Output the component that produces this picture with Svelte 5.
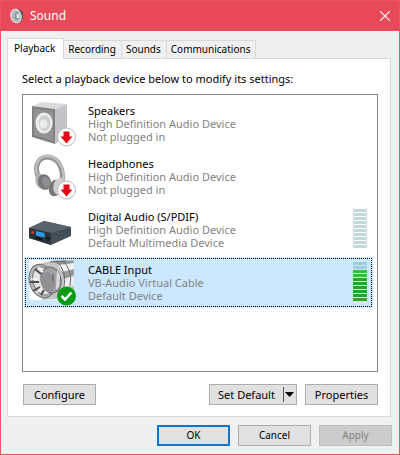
<script>
  const tabs = ['Playback', 'Recording', 'Sounds', 'Communications'];
  const devices = [
    { name: 'Speakers', driver: 'High Definition Audio Device', status: 'Not plugged in', icon: 'speaker', badge: 'down' },
    { name: 'Headphones', driver: 'High Definition Audio Device', status: 'Not plugged in', icon: 'headphones', badge: 'down' },
    { name: 'Digital Audio (S/PDIF)', driver: 'High Definition Audio Device', status: 'Default Multimedia Device', icon: 'digital', level: 0 },
    { name: 'CABLE Input', driver: 'VB-Audio Virtual Cable', status: 'Default Device', icon: 'cable', badge: 'ok', level: 8 },
  ];
  let activeTab = $state('Playback');
  let selected = $state(3);
</script>

<div class="window">
  <header>
    <svg class="app" width="16" height="16" viewBox="0 0 16 16" aria-hidden="true">
      <path d="M6 1 L11 2 L13 5 L13 10 L10 14 L6 15Z" fill="#4b4b4b" />
      <ellipse cx="6" cy="8" rx="5.2" ry="6.8" transform="rotate(-12 6 8)" fill="#b4bcc0" stroke="#e6eaec" />
      <ellipse cx="7" cy="8" rx="2.5" ry="4" fill="#8c979d" />
      <ellipse cx="8" cy="8" rx="1.5" ry="2.4" fill="#e2e7e9" />
    </svg>
    <h1>Sound</h1>
    <button class="close" aria-label="Close">
      <svg width="10" height="10" viewBox="0 0 10 10"><path d="M0 0 L10 10 M10 0 L0 10" stroke="#fff" stroke-width="1.1" /></svg>
    </button>
  </header>

  <main>
    <div class="tabs" role="tablist">
      {#each tabs as tab}
        <button role="tab" class:active={activeTab === tab} aria-selected={activeTab === tab} onclick={() => (activeTab = tab)}>{tab}</button>
      {/each}
    </div>

    <section class="panel" role="tabpanel">
      <p id="hint">Select a playback device below to modify its settings:</p>
      <ul role="listbox" aria-labelledby="hint">
        {#each devices as device, i}
          <li>
            <button class="device" role="option" class:selected={selected === i} aria-selected={selected === i} onclick={() => (selected = i)}>
              <svg class="icon" width="56" height="51" viewBox="0 0 56 51" aria-hidden="true">
                {#if device.icon === 'speaker'}
                  <path d="M8 8 L18 4 L43 6 L31 11Z" fill="#dcdcde" />
                  <path d="M31 11 L43 6 L43 37 L31 46Z" fill="#c3c4c8" />
                  <path d="M8 8 L31 11 L31 46 L8 39Z" fill="#808183" />
                  <path d="M10 11 L29 13 L29 43 L10 37Z" fill="#929395" />
                  <ellipse cx="20" cy="25" rx="8.6" ry="10.6" fill="#ececed" />
                  <ellipse cx="20.5" cy="25" rx="6.6" ry="8.6" fill="#cdd0d1" stroke="#f5f5f5" />
                  <ellipse cx="19.5" cy="26" rx="4" ry="4.5" fill="#e9eaea" />
                {:else if device.icon === 'headphones'}
                  <path d="M14 25 C10 14 15 6 24 6 C34 7 40 17 38 31" fill="none" stroke="#939496" stroke-width="5" />
                  <path d="M13 23 C10 12 16 5 24 5 C34 6 41 17 39 29" fill="none" stroke="#c2c3c5" stroke-width="2" />
                  <ellipse cx="16" cy="30" rx="4.5" ry="7.5" fill="#b0b1b3" transform="rotate(-12 16 30)" />
                  <ellipse cx="20.500" cy="31" rx="6.500" ry="8" fill="#77787a" transform="rotate(-20 20.500 31)" />
                  <ellipse cx="22" cy="31" rx="4" ry="5.500" fill="#8d8e91" transform="rotate(-20 22 31)" />
                  <ellipse cx="31" cy="37" rx="6" ry="8.500" fill="#77787a" transform="rotate(15 31 37)" />
                  <ellipse cx="35" cy="35" rx="5.500" ry="8.500" fill="#cfd0d2" transform="rotate(15 35 35)" />
                {:else if device.icon === 'digital'}
                  <path d="M5 24 L20 17 L47 23 L47 32 L27 41 L5 34Z" fill="#434d55" />
                  <path d="M5 24 L20 17 L47 23 L27 29Z" fill="#59636c" />
                  <path d="M5 24 L27 29 L27 41 L5 34Z" fill="#2d353c" />
                  <path d="M12 27 L20.500 29 L20.500 33.500 L12 31.500Z" fill="#2f9cf2" />
                  <path d="M11 33.500 L18 35.500" stroke="#11161a" stroke-width="2" />
                  <circle cx="8.500" cy="28.500" r="1.400" fill="#e23b3b" />
                  <circle cx="24" cy="34.500" r="2" fill="#151b20" />
                {:else}
                  <path d="M5 3 H50 V43 H5Z" fill="#fff" />
                  <path d="M15 7 L30 3 H50 V37 L34 42 L18 43Z" fill="#c3c4c5" />
                  <path d="M28 4 L49 4 L50 8 L38 9Z" fill="#8f9092" />
                  <path d="M34 8 L50 6 V13 L39 15Z" fill="#f2f2f3" />
                  <path d="M38 15 L50 12 V18 L40 22Z" fill="#9a9b9d" />
                  <path d="M40 22 L50 19 V29 L39 30Z" fill="#ededee" />
                  <path d="M33 5 Q43 14 40 30 M39 4 Q49 14 46 29 M26 5 L42 4" fill="none" stroke="#6a6b6e" />
                  <ellipse cx="18" cy="24" rx="12.500" ry="17" fill="#b9babc" stroke="#66676a" transform="rotate(-18 18 24)" />
                  <ellipse cx="19" cy="24" rx="10" ry="14.500" fill="#e2e2e3" stroke="#77787a" transform="rotate(-18 19 24)" />
                  <ellipse cx="27" cy="23" rx="10" ry="13" fill="#a1a2a4" stroke="#66676a" transform="rotate(-12 27 23)" />
                  <ellipse cx="24" cy="25" rx="7" ry="10" fill="#909193" transform="rotate(-12 24 25)" />
                  <path d="M33 13 L36 18 L35 30 L32 33Z" fill="#d9dadb" />
                  <path d="M6 25 H15 M11 12 L17 17 M9 34 L16 30 M17 38 L20 33" fill="none" stroke="#4b4c4f" stroke-width="2" />
                  <path d="M7 22 L14 22 M14 10 L19 15 M12 36 L17 32" fill="none" stroke="#fafafa" stroke-width="1.500" />
                  <path d="M29 17 V24" fill="none" stroke="#55565a" />
                {/if}
                {#if device.badge === 'down'}
                  <circle cx="42.500" cy="39" r="9" fill="#fff" stroke="#b9babc" />
                  <path d="M39.500 33.500 H45.500 V38.500 H48.500 L42.500 45.500 L36.500 38.500 H39.500Z" fill="#df0a15" />
                {:else if device.badge === 'ok'}
                  <circle cx="42.500" cy="39" r="9.500" fill="#0c9a17" />
                  <path d="M37.500 39 L41 42.500 L47.500 35.500" fill="none" stroke="#fff" stroke-width="2.500" />
                {/if}
              </svg>
              <span class="info">
                <span class="name">{device.name}</span>
                <span>{device.driver}</span>
                <span>{device.status}</span>
              </span>
              {#if device.level !== undefined}
                <span class="meter" class:live={device.level > 0}>
                  {#each Array(10) as _, n}
                    <i class:on={n >= 10 - device.level} class:bright={n < 4}></i>
                  {/each}
                </span>
              {/if}
            </button>
          </li>
        {/each}
      </ul>
      <div class="actions">
        <button class="btn">Configure</button>
        <div class="split">
          <button class="main">Set Default</button>
          <button class="arrow" aria-label="More default options">
            <svg width="9" height="5" viewBox="0 0 9 5"><path d="M0 0 H9 L4.500 5Z" /></svg>
          </button>
        </div>
        <button class="btn">Properties</button>
      </div>
    </section>

    <footer>
      <button class="btn primary">OK</button>
      <button class="btn">Cancel</button>
      <button class="btn" disabled>Apply</button>
    </footer>
  </main>
</div>

<style>
  :global(body) { margin: 0; background: #f0f0f0; }
  .window {
    box-sizing: border-box;
    min-height: 100vh;
    border: 1px solid #e85463;
    background: #f0f0f0;
    color: #000;
    font: 11px/13px "Noto Sans", "Open Sans", sans-serif;
  }
  button { font: inherit; color: inherit; margin: 0; padding: 0; border: 0; background: none; }
  header { display: flex; align-items: center; height: 30px; padding: 0 4px 0 9px; background: #e84a59; color: #fff; }
  h1 { flex: 1; margin: 0 0 0 4px; font-size: 12px; line-height: 16px; font-weight: 400; }
  .close { display: flex; padding: 5px; }
  main { padding: 7px 7px 8px 6px; }
  .tabs { display: flex; align-items: flex-end; height: 20px; font-size: 10px; }
  .tabs button {
    height: 18px;
    padding: 0 5px 0 4px;
    border: 1px solid #d9d9d9;
    border-width: 1px 1px 0 0;
    white-space: nowrap;
  }
  .tabs .active {
    position: relative;
    height: 21px;
    margin-bottom: -1px;
    padding: 0 8px 2px 6px;
    border-left-width: 1px;
    background: #fff;
  }
  .panel { margin-right: 1px; padding: 13px 12px 11px 14px; border: 1px solid #d9d9d9; background: #fff; }
  p { margin: 0 0 9px; }
  ul { min-height: 270px; margin: 0; padding: 3px 4px 3px 1px; border: 1px solid #828790; list-style: none; }
  li { padding-bottom: 2px; }
  .device { display: flex; width: 100%; height: 51px; text-align: left; }
  .icon { flex: none; }
  .selected { background: #cce8ff; outline: 1px dotted #000; outline-offset: -2px; }
  .info { flex: 1; padding: 6px 0 0 8px; color: #838383; }
  .info span { display: block; }
  .info .name { color: #000; }
  .meter { display: flex; flex-direction: column; gap: 1px; padding: 5px 6px 0 0; }
  .meter i { width: 14px; height: 3px; background: #c0dce2; }
  .live i { background: #9ccbe2; }
  .live .on { background: #319f31; }
  .live .on.bright { background: #2fc42f; }
  .actions { display: flex; gap: 8px; margin-top: 12px; padding-left: 1px; }
  .btn { box-sizing: border-box; width: 73px; height: 21px; border: 1px solid #adadad; background: #e1e1e1; }
  .split { display: flex; align-items: center; box-sizing: border-box; width: 88px; height: 21px; margin-left: auto; border: 1px solid #adadad; background: #e1e1e1; }
  .main { flex: 1; }
  .arrow { display: flex; align-items: center; height: 15px; padding: 0 2px 0 1px; border-left: 1px solid #555; }
  .primary { border: 2px solid #0078d7; }
  .btn:disabled { border-color: #bfbfbf; background: #ccc; color: #838383; }
  footer { display: flex; justify-content: flex-end; gap: 8px; margin-top: 8px; font-size: 10px; }
</style>
